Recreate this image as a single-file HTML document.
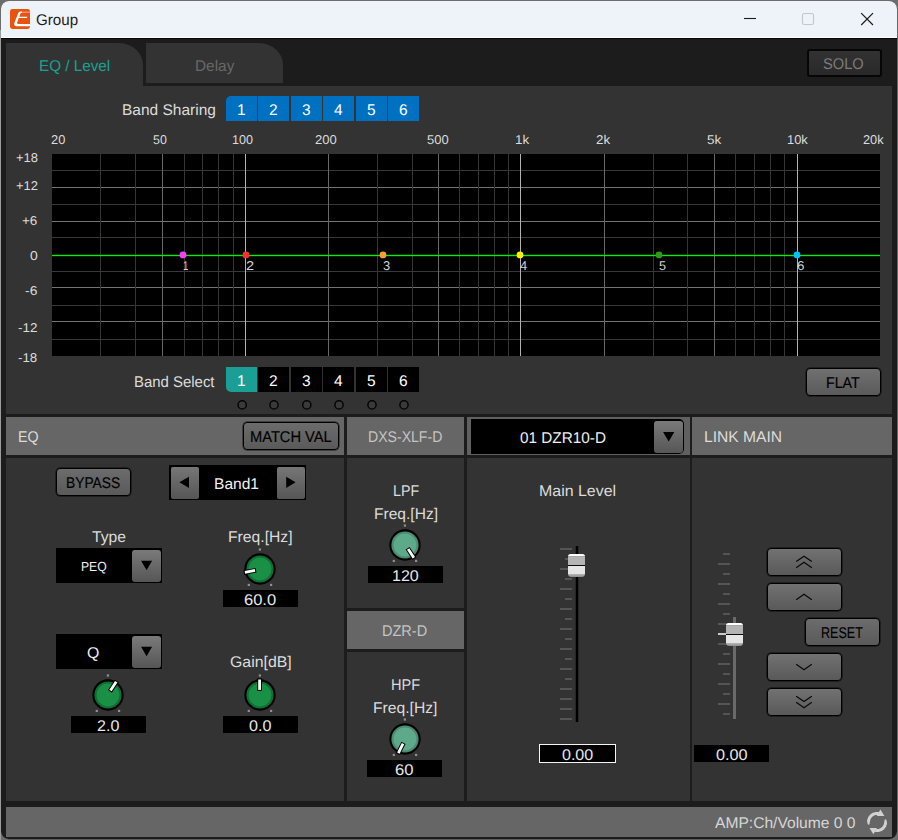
<!DOCTYPE html>
<html><head><meta charset="utf-8"><title>Group</title>
<style>
html,body{margin:0;padding:0;}
body{width:898px;height:840px;overflow:hidden;background:#6c6c6c;position:relative;font-family:"Liberation Sans",sans-serif;}
.b{position:absolute;box-sizing:border-box;}
.t{position:absolute;white-space:nowrap;line-height:1;transform-origin:0 0;display:block;text-rendering:geometricPrecision;}
svg{position:absolute;overflow:visible;}
.btn{border:1px solid #000;border-radius:4px;box-shadow:0 0 0 0.5px rgba(0,0,0,.75);}
</style></head><body>
<div class="b" style="left:1px;top:1px;width:896px;height:838px;background:#1c1c1c;border-radius:8px;overflow:hidden;">
</div>
<div class="b " style="left:0px;top:30px;width:1px;height:810px;background:#9c9c9c;"></div>
<div class="b " style="left:897px;top:8px;width:1px;height:824px;background:#666666;"></div>
<div class="b " style="left:8px;top:839px;width:882px;height:1px;background:#5e5e5e;"></div>
<div class="b " style="left:1px;top:1px;width:896px;height:37px;background:#eef2f9;border-radius:8px 8px 0 0;"></div>
<div class="b " style="left:1px;top:37px;width:896px;height:1px;background:#ffffff;"></div>
<div class="b " style="left:1px;top:38px;width:896px;height:1px;background:#050505;"></div>
<svg style="left:10px;top:9px" width="20" height="20" viewBox="0 0 20 20">
<rect x="0" y="0" width="20" height="20" rx="2.4" fill="#e8530f"/>
<path d="M10.2 2.6 H20 V3.8 H10.2 Z" fill="#fff" fill-opacity=".45"/>
<path d="M10.4 2.6 C9 2.8 8.4 3.6 7.9 4.9 L4.5 13.4 C3.6 15.9 4.6 17.2 6.8 17.2 L20 17.2 L20 14.9 L8.2 14.9 C7.1 14.9 6.9 14.3 7.3 13.3 L8.8 9 L16.9 9 L17.3 7.7 L9.3 7.7 L10.3 5 C10.6 4.1 11.1 3.8 12 3.8 L12 2.6 Z" fill="#fff"/>
</svg>
<span class="t" style="left:35.69px;top:12px;font-size:62px;color:#1b1b1b;transform:scale(0.24451,.25);">Group</span>
<svg style="left:740px;top:8px" width="150" height="24" viewBox="740 8 150 24">
<path d="M744 18.5 H756" stroke="#1a1a1a" stroke-width="1.1"/>
<rect x="802.5" y="13.5" width="11" height="11" rx="1.8" fill="none" stroke="#c3c6cc" stroke-width="1.1"/>
<path d="M861.2 13.2 L873 25 M873 13.2 L861.2 25" stroke="#1a1a1a" stroke-width="1.2"/>
</svg>
<div class="b " style="left:6px;top:43px;width:137px;height:44px;background:#333333;border-radius:0 24px 0 0 / 0 22px 0 0;"></div>
<div class="b " style="left:146px;top:43px;width:137px;height:40px;background:#333333;border-radius:0 24px 0 0 / 0 22px 0 0;"></div>
<span class="t" style="left:38.50px;top:58px;font-size:62px;color:#17a393;transform:scale(0.24571,.25);">EQ / Level</span>
<span class="t" style="left:194.54px;top:58px;font-size:62px;color:#686868;transform:scale(0.24813,.25);">Delay</span>
<div class="b " style="left:807px;top:49px;width:75px;height:28px;background:linear-gradient(#323232,#292929);border:2px solid #060606;border-radius:3px;"></div>
<span class="t" style="left:823.37px;top:56px;font-size:62px;color:#7c7c7c;transform:scale(0.23646,.25);">SOLO</span>
<div class="b " style="left:6px;top:86px;width:886px;height:328px;background:#333333;"></div>
<span class="t" style="left:121.53px;top:102px;font-size:62px;color:#dcdcdc;transform:scale(0.24981,.25);">Band Sharing</span>
<div class="b " style="left:226px;top:96px;width:31px;height:25px;background:#0070c0;border-radius:5px 0 0 0;"></div>
<span class="t" style="left:236.99px;top:102px;font-size:62px;color:#ffffff;transform:scale(0.25000,.25);">1</span>
<div class="b " style="left:258px;top:96px;width:31px;height:25px;background:#0070c0;"></div>
<span class="t" style="left:269.20px;top:102px;font-size:62px;color:#ffffff;transform:scale(0.25000,.25);">2</span>
<div class="b " style="left:291px;top:96px;width:31px;height:25px;background:#0070c0;"></div>
<span class="t" style="left:302.23px;top:102px;font-size:62px;color:#ffffff;transform:scale(0.25000,.25);">3</span>
<div class="b " style="left:323px;top:96px;width:31px;height:25px;background:#0070c0;"></div>
<span class="t" style="left:334.26px;top:102px;font-size:62px;color:#ffffff;transform:scale(0.25000,.25);">4</span>
<div class="b " style="left:356px;top:96px;width:31px;height:25px;background:#0070c0;"></div>
<span class="t" style="left:367.20px;top:102px;font-size:62px;color:#ffffff;transform:scale(0.25000,.25);">5</span>
<div class="b " style="left:388px;top:96px;width:31px;height:25px;background:#0070c0;"></div>
<span class="t" style="left:399.11px;top:102px;font-size:62px;color:#ffffff;transform:scale(0.25000,.25);">6</span>
<svg style="left:52px;top:154px" width="828" height="202" viewBox="52 154 828 202" shape-rendering="crispEdges"><rect x="52" y="154" width="828" height="202" fill="#000"/><rect x="52" y="170" width="828" height="1" fill="#383838"/><rect x="52" y="187" width="828" height="1" fill="#747474"/><rect x="52" y="204" width="828" height="1" fill="#383838"/><rect x="52" y="221" width="828" height="1" fill="#747474"/><rect x="52" y="237" width="828" height="1" fill="#383838"/><rect x="52" y="271" width="828" height="1" fill="#383838"/><rect x="52" y="287" width="828" height="1" fill="#747474"/><rect x="52" y="305" width="828" height="1" fill="#383838"/><rect x="52" y="321" width="828" height="1" fill="#747474"/><rect x="52" y="339" width="828" height="1" fill="#383838"/><rect x="100" y="154" width="1" height="202" fill="#353535"/><rect x="135" y="154" width="1" height="202" fill="#353535"/><rect x="162" y="154" width="1" height="202" fill="#686868"/><rect x="184" y="154" width="1" height="202" fill="#353535"/><rect x="202" y="154" width="1" height="202" fill="#353535"/><rect x="218" y="154" width="1" height="202" fill="#353535"/><rect x="233" y="154" width="1" height="202" fill="#353535"/><rect x="245" y="154" width="1" height="202" fill="#b2b2b2"/><rect x="328" y="154" width="1" height="202" fill="#686868"/><rect x="377" y="154" width="1" height="202" fill="#353535"/><rect x="412" y="154" width="1" height="202" fill="#353535"/><rect x="438" y="154" width="1" height="202" fill="#686868"/><rect x="459" y="154" width="1" height="202" fill="#353535"/><rect x="478" y="154" width="1" height="202" fill="#353535"/><rect x="494" y="154" width="1" height="202" fill="#353535"/><rect x="508" y="154" width="1" height="202" fill="#353535"/><rect x="520" y="154" width="1" height="202" fill="#b2b2b2"/><rect x="604" y="154" width="1" height="202" fill="#686868"/><rect x="653" y="154" width="1" height="202" fill="#353535"/><rect x="687" y="154" width="1" height="202" fill="#353535"/><rect x="714" y="154" width="1" height="202" fill="#686868"/><rect x="735" y="154" width="1" height="202" fill="#353535"/><rect x="754" y="154" width="1" height="202" fill="#353535"/><rect x="770" y="154" width="1" height="202" fill="#353535"/><rect x="784" y="154" width="1" height="202" fill="#353535"/><rect x="797" y="154" width="1" height="202" fill="#b2b2b2"/><rect x="52" y="255" width="828" height="1" fill="#00f200"/><rect x="52" y="254" width="828" height="1" fill="#00e800" opacity=".18"/><rect x="52" y="256" width="828" height="1" fill="#00e800" opacity=".18"/></svg>
<svg style="left:52px;top:154px" width="828" height="202" viewBox="52 154 828 202"><circle cx="183" cy="254.9" r="3.4" fill="#ff3cff"/><circle cx="246" cy="254.9" r="3.4" fill="#ff3030"/><circle cx="383" cy="254.9" r="3.4" fill="#ff9a3a"/><circle cx="520" cy="254.9" r="3.4" fill="#fff000"/><circle cx="659" cy="254.9" r="3.4" fill="#2f9a14"/><circle cx="797" cy="254.9" r="3.4" fill="#00c0ff"/></svg>
<span class="t" style="left:183.20px;top:259px;font-size:51.2px;color:#d4d4d4;transform:scale(0.18468,.25);">1</span>
<span class="t" style="left:245.62px;top:259px;font-size:51.2px;color:#d4d4d4;transform:scale(0.28390,.25);">2</span>
<span class="t" style="left:382.95px;top:259px;font-size:51.2px;color:#d4d4d4;transform:scale(0.25203,.25);">3</span>
<span class="t" style="left:520.15px;top:259px;font-size:51.2px;color:#d4d4d4;transform:scale(0.25385,.25);">4</span>
<span class="t" style="left:659.11px;top:259px;font-size:51.2px;color:#d4d4d4;transform:scale(0.24590,.25);">5</span>
<span class="t" style="left:796.82px;top:259px;font-size:51.2px;color:#d4d4d4;transform:scale(0.26050,.25);">6</span>
<span class="t" style="left:50.90px;top:133px;font-size:51.2px;color:#dcdcdc;transform:scale(0.25095,.25);">20</span>
<span class="t" style="left:153.01px;top:133px;font-size:51.2px;color:#dcdcdc;transform:scale(0.24340,.25);">50</span>
<span class="t" style="left:232.07px;top:133px;font-size:51.2px;color:#dcdcdc;transform:scale(0.24561,.25);">100</span>
<span class="t" style="left:314.69px;top:133px;font-size:51.2px;color:#dcdcdc;transform:scale(0.25493,.25);">200</span>
<span class="t" style="left:426.69px;top:133px;font-size:51.2px;color:#dcdcdc;transform:scale(0.25368,.25);">500</span>
<span class="t" style="left:514.60px;top:133px;font-size:51.2px;color:#dcdcdc;transform:scale(0.26190,.25);">1k</span>
<span class="t" style="left:595.87px;top:133px;font-size:51.2px;color:#dcdcdc;transform:scale(0.26062,.25);">2k</span>
<span class="t" style="left:706.98px;top:133px;font-size:51.2px;color:#dcdcdc;transform:scale(0.26245,.25);">5k</span>
<span class="t" style="left:786.74px;top:133px;font-size:51.2px;color:#dcdcdc;transform:scale(0.25190,.25);">10k</span>
<span class="t" style="left:862.80px;top:133px;font-size:51.2px;color:#dcdcdc;transform:scale(0.25000,.25);">20k</span>
<span class="t" style="left:15.64px;top:151px;font-size:51.2px;color:#dcdcdc;transform:scale(0.25303,.25);">+18</span>
<span class="t" style="left:15.64px;top:179px;font-size:51.2px;color:#dcdcdc;transform:scale(0.25427,.25);">+12</span>
<span class="t" style="left:22.27px;top:214px;font-size:51.2px;color:#dcdcdc;transform:scale(0.26296,.25);">+6</span>
<span class="t" style="left:29.86px;top:249px;font-size:51.2px;color:#dcdcdc;transform:scale(0.27236,.25);">0</span>
<span class="t" style="left:25.30px;top:284px;font-size:51.2px;color:#dcdcdc;transform:scale(0.27184,.25);">-6</span>
<span class="t" style="left:18.32px;top:321px;font-size:51.2px;color:#dcdcdc;transform:scale(0.26225,.25);">-12</span>
<span class="t" style="left:18.33px;top:351px;font-size:51.2px;color:#dcdcdc;transform:scale(0.26074,.25);">-18</span>
<span class="t" style="left:134.48px;top:374px;font-size:62px;color:#dcdcdc;transform:scale(0.24081,.25);">Band Select</span>
<div class="b " style="left:226px;top:367px;width:31px;height:25px;background:#1a9f96;border-radius:0 0 0 5px;"></div>
<span class="t" style="left:236.99px;top:373px;font-size:62px;color:#ffffff;transform:scale(0.25000,.25);">1</span>
<div class="b " style="left:258px;top:367px;width:31px;height:25px;background:#000;"></div>
<span class="t" style="left:269.20px;top:373px;font-size:62px;color:#ffffff;transform:scale(0.25000,.25);">2</span>
<div class="b " style="left:291px;top:367px;width:31px;height:25px;background:#000;"></div>
<span class="t" style="left:302.23px;top:373px;font-size:62px;color:#ffffff;transform:scale(0.25000,.25);">3</span>
<div class="b " style="left:323px;top:367px;width:31px;height:25px;background:#000;"></div>
<span class="t" style="left:334.26px;top:373px;font-size:62px;color:#ffffff;transform:scale(0.25000,.25);">4</span>
<div class="b " style="left:356px;top:367px;width:31px;height:25px;background:#000;"></div>
<span class="t" style="left:367.20px;top:373px;font-size:62px;color:#ffffff;transform:scale(0.25000,.25);">5</span>
<div class="b " style="left:388px;top:367px;width:31px;height:25px;background:#000;"></div>
<span class="t" style="left:399.11px;top:373px;font-size:62px;color:#ffffff;transform:scale(0.25000,.25);">6</span>
<svg style="left:230px;top:398px" width="190" height="14" viewBox="230 398 190 14"><circle cx="242.2" cy="404.9" r="4.1" fill="#3a3a3a" stroke="#050505" stroke-width="1.5"/><circle cx="274" cy="404.9" r="4.1" fill="#3a3a3a" stroke="#050505" stroke-width="1.5"/><circle cx="306.8" cy="404.9" r="4.1" fill="#3a3a3a" stroke="#050505" stroke-width="1.5"/><circle cx="339" cy="404.9" r="4.1" fill="#3a3a3a" stroke="#050505" stroke-width="1.5"/><circle cx="372" cy="404.9" r="4.1" fill="#3a3a3a" stroke="#050505" stroke-width="1.5"/><circle cx="404" cy="404.9" r="4.1" fill="#3a3a3a" stroke="#050505" stroke-width="1.5"/></svg>
<div class="b btn" style="left:806px;top:368px;width:75px;height:28px;background:linear-gradient(#707070,#5a5a5a);"></div>
<span class="t" style="left:826.43px;top:375px;font-size:62px;color:#000000;transform:scale(0.22955,.25);-webkit-text-stroke:0.6px #000;">FLAT</span>
<div class="b " style="left:6px;top:417px;width:338px;height:38px;background:#666666;"></div>
<div class="b " style="left:347px;top:417px;width:117px;height:38px;background:#666666;"></div>
<div class="b " style="left:467px;top:417px;width:223px;height:38px;background:#606060;"></div>
<div class="b " style="left:692px;top:417px;width:200px;height:38px;background:#666666;"></div>
<div class="b " style="left:6px;top:458px;width:338px;height:343px;background:#333333;"></div>
<div class="b " style="left:347px;top:458px;width:117px;height:150px;background:#333333;"></div>
<div class="b " style="left:347px;top:611px;width:117px;height:38px;background:#666666;"></div>
<div class="b " style="left:347px;top:652px;width:117px;height:149px;background:#333333;"></div>
<div class="b " style="left:467px;top:458px;width:223px;height:343px;background:#333333;"></div>
<div class="b " style="left:692px;top:458px;width:200px;height:343px;background:#333333;"></div>
<div class="b " style="left:6px;top:807px;width:886px;height:30px;background:#666666;"></div>
<span class="t" style="left:17.53px;top:429px;font-size:62px;color:#dcdcdc;transform:scale(0.22912,.25);">EQ</span>
<div class="b btn" style="left:243px;top:422px;width:96px;height:28px;background:linear-gradient(#6c6c6c,#5a5a5a);"></div>
<span class="t" style="left:249.80px;top:429px;font-size:62px;color:#000000;transform:scale(0.23628,.25);-webkit-text-stroke:0.6px #000;">MATCH VAL</span>
<span class="t" style="left:367.94px;top:429px;font-size:62px;color:#c4c4c4;transform:scale(0.22713,.25);">DXS-XLF-D</span>
<span class="t" style="left:703.52px;top:429px;font-size:62px;color:#dcdcdc;transform:scale(0.25148,.25);">LINK MAIN</span>
<span class="t" style="left:381.81px;top:623px;font-size:62px;color:#c4c4c4;transform:scale(0.23432,.25);">DZR-D</span>
<div class="b " style="left:471px;top:419px;width:213px;height:35px;background:#000;border-radius:0 5px 5px 0;"></div>
<div class="b " style="left:654px;top:421px;width:29px;height:32px;background:linear-gradient(#7a7a7a,#565656);border-radius:3px;"></div>
<svg style="left:654px;top:421px" width="29" height="32" viewBox="654 421 29 32"><path d="M663.1 431.9 H674.3000000000001 L668.7 441.5 Z" fill="#000"/></svg>
<span class="t" style="left:519.50px;top:430px;font-size:62px;color:#f0f0f0;transform:scale(0.24716,.25);">01 DZR10-D</span>
<div class="b btn" style="left:56px;top:468px;width:75px;height:28px;background:linear-gradient(#6c6c6c,#5a5a5a);"></div>
<span class="t" style="left:66.37px;top:475px;font-size:62px;color:#000000;transform:scale(0.22279,.25);-webkit-text-stroke:0.6px #000;">BYPASS</span>
<div class="b " style="left:169px;top:465px;width:137px;height:35px;background:#000;"></div>
<div class="b " style="left:171px;top:467px;width:28px;height:31.5px;background:linear-gradient(#767676,#565656);border-radius:2px;"></div>
<div class="b " style="left:276.5px;top:467px;width:28.0px;height:31.5px;background:linear-gradient(#767676,#565656);border-radius:2px;"></div>
<svg style="left:169px;top:465px" width="137" height="35" viewBox="169 465 137 35"><path d="M179.4 482.3 L189 476.7 V487.9 Z" fill="#000"/><path d="M295.6 482.3 L286.2 476.7 V487.9 Z" fill="#000"/></svg>
<span class="t" style="left:214.12px;top:476px;font-size:62px;color:#f0f0f0;transform:scale(0.25113,.25);">Band1</span>
<span class="t" style="left:91.69px;top:529px;font-size:62px;color:#dcdcdc;transform:scale(0.25280,.25);">Type</span>
<div class="b " style="left:56px;top:548px;width:106px;height:35px;background:#000;"></div>
<div class="b " style="left:132px;top:549.5px;width:29px;height:32.0px;background:linear-gradient(#7a7a7a,#565656);border-radius:3px;"></div>
<svg style="left:132px;top:548px" width="30" height="35" viewBox="132 548 30 35"><path d="M141.1 560.85 H152.1 L146.6 570.15 Z" fill="#000"/></svg>
<span class="t" style="left:80.70px;top:560px;font-size:52.8px;color:#f0f0f0;transform:scale(0.23002,.25);">PEQ</span>
<div class="b " style="left:56px;top:634px;width:106px;height:35px;background:#000;"></div>
<div class="b " style="left:132px;top:635.5px;width:29px;height:32.0px;background:linear-gradient(#7a7a7a,#565656);border-radius:3px;"></div>
<svg style="left:132px;top:634px" width="30" height="35" viewBox="132 634 30 35"><path d="M141.1 646.85 H152.1 L146.6 656.15 Z" fill="#000"/></svg>
<span class="t" style="left:87.06px;top:645px;font-size:62px;color:#f0f0f0;transform:scale(0.25482,.25);">Q</span>
<span class="t" style="left:228.41px;top:529px;font-size:62px;color:#dcdcdc;transform:scale(0.25328,.25);">Freq.[Hz]</span>
<svg style="left:240px;top:546.8px" width="40" height="42" viewBox="240 546.8 40 42"><circle cx="260" cy="568.8" r="14.65" fill="#0e6e34" stroke="#000" stroke-width="2.1"/><circle cx="260" cy="568.8" r="11.4" fill="#1a9046"/><path d="M256.06 569.99 L243.79 572.42" stroke="#000" stroke-width="4.7" stroke-linecap="butt"/><path d="M255.07 570.18 L244.87 572.20" stroke="#fff" stroke-width="2.8" stroke-linecap="butt"/><rect x="258.80" y="548.20" width="2.2" height="2.2" fill="#909090"/><rect x="247.70" y="583.65" width="2.2" height="2.2" fill="#909090"/><rect x="270.00" y="583.65" width="2.2" height="2.2" fill="#909090"/></svg>
<div class="b " style="left:223px;top:590px;width:75px;height:17px;background:#000;"></div>
<span class="t" style="left:244.46px;top:592px;font-size:62px;color:#e8e8e8;transform:scale(0.26631,.25);">60.0</span>
<svg style="left:88px;top:672.8px" width="40" height="42" viewBox="88 672.8 40 42"><circle cx="108" cy="694.8" r="14.65" fill="#0e6e34" stroke="#000" stroke-width="2.1"/><circle cx="108" cy="694.8" r="11.4" fill="#1a9046"/><path d="M109.93 691.16 L116.83 680.74" stroke="#000" stroke-width="4.7" stroke-linecap="butt"/><path d="M110.48 690.33 L116.22 681.65" stroke="#fff" stroke-width="2.8" stroke-linecap="butt"/><rect x="106.80" y="674.20" width="2.2" height="2.2" fill="#909090"/><rect x="95.70" y="709.65" width="2.2" height="2.2" fill="#909090"/><rect x="118.00" y="709.65" width="2.2" height="2.2" fill="#909090"/></svg>
<div class="b " style="left:71px;top:716px;width:75px;height:17px;background:#000;"></div>
<span class="t" style="left:96.95px;top:718px;font-size:62px;color:#e8e8e8;transform:scale(0.25883,.25);">2.0</span>
<span class="t" style="left:229.86px;top:654px;font-size:62px;color:#dcdcdc;transform:scale(0.25561,.25);">Gain[dB]</span>
<svg style="left:240px;top:672.8px" width="40" height="42" viewBox="240 672.8 40 42"><circle cx="260" cy="694.8" r="14.65" fill="#0e6e34" stroke="#000" stroke-width="2.1"/><circle cx="260" cy="694.8" r="11.4" fill="#1a9046"/><path d="M259.60 690.70 L259.60 678.20" stroke="#000" stroke-width="4.7" stroke-linecap="butt"/><path d="M259.60 689.70 L259.60 679.30" stroke="#fff" stroke-width="2.8" stroke-linecap="butt"/><rect x="258.80" y="674.20" width="2.2" height="2.2" fill="#909090"/><rect x="247.70" y="709.65" width="2.2" height="2.2" fill="#909090"/><rect x="270.00" y="709.65" width="2.2" height="2.2" fill="#909090"/></svg>
<div class="b " style="left:223px;top:716px;width:75px;height:17px;background:#000;"></div>
<span class="t" style="left:248.87px;top:718px;font-size:62px;color:#e8e8e8;transform:scale(0.25975,.25);">0.0</span>
<span class="t" style="left:392.53px;top:483px;font-size:62px;color:#dcdcdc;transform:scale(0.23044,.25);">LPF</span>
<span class="t" style="left:373.82px;top:506px;font-size:62px;color:#dcdcdc;transform:scale(0.25124,.25);">Freq.[Hz]</span>
<svg style="left:385px;top:522.7px" width="40" height="42" viewBox="385 522.7 40 42"><circle cx="405" cy="544.7" r="14.65" fill="#4a8c74" stroke="#000" stroke-width="2.1"/><circle cx="405" cy="544.7" r="11.4" fill="#5fa98b"/><path d="M407.59 547.91 L414.45 558.35" stroke="#000" stroke-width="4.7" stroke-linecap="butt"/><path d="M408.13 548.74 L413.84 557.44" stroke="#fff" stroke-width="2.8" stroke-linecap="butt"/><rect x="403.80" y="524.10" width="2.2" height="2.2" fill="#909090"/><rect x="392.70" y="559.55" width="2.2" height="2.2" fill="#909090"/><rect x="415.00" y="559.55" width="2.2" height="2.2" fill="#909090"/></svg>
<div class="b " style="left:368px;top:566px;width:75px;height:17px;background:#000;"></div>
<span class="t" style="left:392.11px;top:568px;font-size:62px;color:#e8e8e8;transform:scale(0.25871,.25);">120</span>
<span class="t" style="left:390.50px;top:677px;font-size:62px;color:#dcdcdc;transform:scale(0.23558,.25);">HPF</span>
<span class="t" style="left:373.42px;top:700px;font-size:62px;color:#dcdcdc;transform:scale(0.25247,.25);">Freq.[Hz]</span>
<svg style="left:385px;top:716.7px" width="40" height="42" viewBox="385 716.7 40 42"><circle cx="405" cy="738.7" r="14.65" fill="#4a8c74" stroke="#000" stroke-width="2.1"/><circle cx="405" cy="738.7" r="11.4" fill="#5fa98b"/><path d="M403.51 742.54 L397.87 753.70" stroke="#000" stroke-width="4.7" stroke-linecap="butt"/><path d="M403.06 743.43 L398.37 752.72" stroke="#fff" stroke-width="2.8" stroke-linecap="butt"/><rect x="403.80" y="718.10" width="2.2" height="2.2" fill="#909090"/><rect x="392.70" y="753.55" width="2.2" height="2.2" fill="#909090"/><rect x="415.00" y="753.55" width="2.2" height="2.2" fill="#909090"/></svg>
<div class="b " style="left:367px;top:760px;width:75px;height:17px;background:#000;"></div>
<span class="t" style="left:394.66px;top:762px;font-size:62px;color:#e8e8e8;transform:scale(0.26791,.25);">60</span>
<span class="t" style="left:538.99px;top:483px;font-size:62px;color:#dcdcdc;transform:scale(0.25703,.25);">Main Level</span>
<svg style="left:555px;top:540px" width="40" height="190" viewBox="555 540 40 190" shape-rendering="crispEdges"><rect x="560" y="548" width="12" height="2" fill="#555"/><rect x="565" y="558" width="7" height="2" fill="#555"/><rect x="560" y="568" width="12" height="2" fill="#555"/><rect x="565" y="578" width="7" height="2" fill="#555"/><rect x="560" y="588" width="12" height="2" fill="#555"/><rect x="565" y="598" width="7" height="2" fill="#555"/><rect x="560" y="608" width="12" height="2" fill="#555"/><rect x="565" y="618" width="7" height="2" fill="#555"/><rect x="560" y="628" width="12" height="2" fill="#555"/><rect x="565" y="638" width="7" height="2" fill="#555"/><rect x="560" y="648" width="12" height="2" fill="#555"/><rect x="565" y="658" width="7" height="2" fill="#555"/><rect x="560" y="668" width="12" height="2" fill="#555"/><rect x="565" y="678" width="7" height="2" fill="#555"/><rect x="560" y="688" width="12" height="2" fill="#555"/><rect x="560" y="698" width="12" height="2" fill="#555"/><rect x="560" y="708" width="12" height="2" fill="#555"/><rect x="560" y="718" width="12" height="2" fill="#555"/><rect x="575" y="546" width="4" height="176" fill="#262626"/><rect x="576" y="546" width="2" height="176" fill="#000"/></svg>
<div class="b " style="left:568px;top:554px;width:17px;height:23px;background:linear-gradient(#ffffff 0,#ffffff 2px,#9c9c9c 2px,#b4b4b4 3px,#b4b4b4 11px,#0a0a0a 11px,#0a0a0a 12px,#e6e6e6 12px,#e4e4e4 20px,#b0b0b0 20.5px,#8c8c8c 23px);border-radius:2.5px 2.5px 3.5px 3.5px;"></div>
<div class="b " style="left:539px;top:744px;width:77px;height:19px;background:#000;border:1px solid #f4f4f4;"></div>
<span class="t" style="left:561.97px;top:747px;font-size:62px;color:#e8e8e8;transform:scale(0.25860,.25);">0.00</span>
<svg style="left:710px;top:545px" width="40" height="180" viewBox="710 545 40 180" shape-rendering="crispEdges"><rect x="723" y="553" width="7" height="2" fill="#555"/><rect x="718" y="563" width="12" height="2" fill="#555"/><rect x="723" y="573" width="7" height="2" fill="#555"/><rect x="718" y="583" width="12" height="2" fill="#555"/><rect x="723" y="593" width="7" height="2" fill="#555"/><rect x="718" y="603" width="12" height="2" fill="#555"/><rect x="723" y="613" width="7" height="2" fill="#555"/><rect x="718" y="623" width="12" height="2" fill="#555"/><rect x="718" y="633" width="12" height="2" fill="#cacaca"/><rect x="718" y="643" width="12" height="2" fill="#555"/><rect x="723" y="653" width="7" height="2" fill="#555"/><rect x="718" y="663" width="12" height="2" fill="#555"/><rect x="723" y="673" width="7" height="2" fill="#555"/><rect x="718" y="683" width="12" height="2" fill="#555"/><rect x="723" y="693" width="7" height="2" fill="#555"/><rect x="718" y="703" width="12" height="2" fill="#555"/><rect x="723" y="713" width="7" height="2" fill="#555"/><rect x="733" y="617" width="3" height="102" fill="#6a6a6a"/></svg>
<div class="b " style="left:726px;top:623px;width:17px;height:23px;background:linear-gradient(#ffffff 0,#ffffff 2px,#9c9c9c 2px,#b4b4b4 3px,#b4b4b4 11px,#0a0a0a 11px,#0a0a0a 12px,#e6e6e6 12px,#e4e4e4 20px,#b0b0b0 20.5px,#8c8c8c 23px);border-radius:2.5px 2.5px 3.5px 3.5px;"></div>
<div class="b " style="left:694px;top:745px;width:75px;height:17px;background:#000;"></div>
<span class="t" style="left:715.57px;top:747px;font-size:62px;color:#e8e8e8;transform:scale(0.26205,.25);">0.00</span>
<div class="b btn" style="left:767px;top:548px;width:75px;height:28px;background:linear-gradient(#727272,#595959);"></div>
<svg style="left:767px;top:548px" width="75" height="28" viewBox="767 548 75 28"><path d="M796.2 561.6 L804 556.2 L811.8 561.6" fill="none" stroke="#0a0a0a" stroke-width="1.25"/><path d="M796.2 567.6999999999999 L804 562.3 L811.8 567.6999999999999" fill="none" stroke="#0a0a0a" stroke-width="1.25"/></svg>
<div class="b btn" style="left:767px;top:583px;width:75px;height:28px;background:linear-gradient(#727272,#595959);"></div>
<svg style="left:767px;top:583px" width="75" height="28" viewBox="767 583 75 28"><path d="M796.2 599.6999999999999 L804 594.3 L811.8 599.6999999999999" fill="none" stroke="#0a0a0a" stroke-width="1.25"/></svg>
<div class="b btn" style="left:767px;top:653px;width:75px;height:28px;background:linear-gradient(#727272,#595959);"></div>
<svg style="left:767px;top:653px" width="75" height="28" viewBox="767 653 75 28"><path d="M796.2 664.3 L804 669.6999999999999 L811.8 664.3" fill="none" stroke="#0a0a0a" stroke-width="1.25"/></svg>
<div class="b btn" style="left:767px;top:688px;width:75px;height:28px;background:linear-gradient(#727272,#595959);"></div>
<svg style="left:767px;top:688px" width="75" height="28" viewBox="767 688 75 28"><path d="M796.2 696.2 L804 701.6 L811.8 696.2" fill="none" stroke="#0a0a0a" stroke-width="1.25"/><path d="M796.2 702.3 L804 707.6999999999999 L811.8 702.3" fill="none" stroke="#0a0a0a" stroke-width="1.25"/></svg>
<div class="b btn" style="left:805px;top:618px;width:75px;height:28px;background:linear-gradient(#6c6c6c,#5a5a5a);"></div>
<span class="t" style="left:821.37px;top:625px;font-size:62px;color:#000000;transform:scale(0.20221,.25);-webkit-text-stroke:0.6px #000;">RESET</span>
<span class="t" style="left:715.00px;top:815px;font-size:62px;color:#d6d6d6;transform:scale(0.25159,.25);">AMP:Ch/Volume 0 0</span>
<svg style="left:862px;top:807px" width="30" height="30" viewBox="862 807 30 30">
<path d="M868.11 824.73 L867.76 823.98 L867.48 823.19 L867.27 822.36 L867.13 821.51 L867.09 820.64 L867.25 819.78 L867.48 818.94 L867.78 818.13 L868.15 817.34 L868.58 816.59 L869.08 815.88 L869.64 815.21 L870.25 814.60 L870.92 814.04 L871.63 813.54 L872.38 813.10 L873.17 812.73 L873.99 812.43 L874.82 812.20 L875.68 812.04 L876.55 811.96 L877.42 811.96 L878.28 812.03 L879.14 812.17 L878.52 815.10 L877.91 815.00 L877.31 814.95 L876.70 814.96 L876.09 815.02 L875.49 815.12 L874.90 815.29 L874.33 815.50 L873.78 815.76 L873.25 816.06 L872.75 816.41 L872.28 816.81 L871.85 817.24 L871.46 817.70 L871.11 818.20 L870.80 818.73 L870.54 819.28 L870.33 819.86 L870.17 820.44 L870.07 821.04 L869.89 821.65 L869.74 822.27 L869.65 822.92 L869.61 823.59 L869.64 824.27 Z" fill="#d2d2d2"/>
<path d="M880.4 809.6 L884.4 816 L876.8 816 Z" fill="#d2d2d2"/>
<path d="M885.99 819.27 L886.34 820.02 L886.62 820.81 L886.83 821.64 L886.97 822.49 L887.01 823.36 L886.85 824.22 L886.62 825.06 L886.32 825.87 L885.95 826.66 L885.52 827.41 L885.02 828.12 L884.46 828.79 L883.85 829.40 L883.18 829.96 L882.47 830.46 L881.72 830.90 L880.93 831.27 L880.11 831.57 L879.28 831.80 L878.42 831.96 L877.55 832.04 L876.68 832.04 L875.82 831.97 L874.96 831.83 L875.58 828.90 L876.19 829.00 L876.79 829.05 L877.40 829.04 L878.01 828.98 L878.61 828.88 L879.20 828.71 L879.77 828.50 L880.32 828.24 L880.85 827.94 L881.35 827.59 L881.82 827.19 L882.25 826.76 L882.64 826.30 L882.99 825.80 L883.30 825.27 L883.56 824.72 L883.77 824.14 L883.93 823.56 L884.03 822.96 L884.21 822.35 L884.36 821.73 L884.45 821.08 L884.49 820.41 L884.46 819.73 Z" fill="#d2d2d2"/>
<path d="M869.5 828.1 L876.9 828.1 L873.4 834.3 Z" fill="#d2d2d2"/>
</svg>
</body></html>
